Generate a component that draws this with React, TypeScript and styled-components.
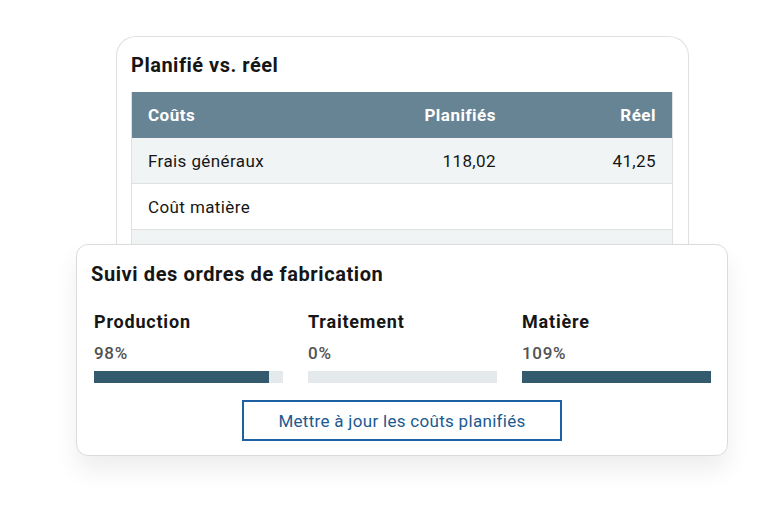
import React from 'react';
import styled, { createGlobalStyle } from 'styled-components';

const GlobalStyle = createGlobalStyle`
    html, body {
        margin: 0;
        padding: 0;
        background: #ffffff;
        font-family: Roboto, "Noto Sans", "Liberation Sans", sans-serif;
        color: #161616;
    }
`;

type CostRow = { label: string; planned?: string; actual?: string };

const rows: CostRow[] = [
    { label: 'Frais généraux', planned: '118,02', actual: '41,25' },
    { label: 'Coût matière' },
    { label: '' },
];

type Progress = { label: string; percent: number };

const progress: Progress[] = [
    { label: 'Production', percent: 98 },
    { label: 'Traitement', percent: 0 },
    { label: 'Matière', percent: 109 },
];

// bars are scaled against a slightly higher ceiling than 100%
const SCALE_MAX = 106;

const App = () => {
    return (
        <Page>
            <GlobalStyle />
            <BackCard>
                <CardTitle>Planifié vs. réel</CardTitle>
                <CostTable>
                    <HeaderRow>
                        <HeaderCell>Coûts</HeaderCell>
                        <HeaderCell $right>Planifiés</HeaderCell>
                        <HeaderCell $right>Réel</HeaderCell>
                    </HeaderRow>
                    {rows.map((row, i) => (
                        <BodyRow key={i} $striped={i % 2 === 0}>
                            <BodyCell>{row.label}</BodyCell>
                            <BodyCell $right>{row.planned}</BodyCell>
                            <BodyCell $right>{row.actual}</BodyCell>
                        </BodyRow>
                    ))}
                </CostTable>
            </BackCard>

            <FrontCard>
                <FrontTitle>Suivi des ordres de fabrication</FrontTitle>
                <ProgressGrid>
                    {progress.map((p) => (
                        <ProgressItem key={p.label}>
                            <ProgressLabel>{p.label}</ProgressLabel>
                            <ProgressValue>{p.percent}%</ProgressValue>
                            <Track>
                                <Fill
                                    style={{
                                        width: `${Math.min((p.percent / SCALE_MAX) * 100, 100)}%`,
                                    }}
                                />
                            </Track>
                        </ProgressItem>
                    ))}
                </ProgressGrid>
                <ButtonRow>
                    <OutlineButton>Mettre à jour les coûts planifiés</OutlineButton>
                </ButtonRow>
            </FrontCard>
        </Page>
    );
};

const Page = styled.div`
    width: 783px;
    height: 508px;
    padding: 36px 0 0 76px;
    box-sizing: border-box;
    overflow: hidden;
`;

const BackCard = styled.div`
    width: 573px;
    height: 230px;
    margin-left: 40px;
    box-sizing: border-box;
    border: 1px solid #e0e0e0;
    border-bottom: none;
    border-radius: 20px 20px 0 0;
    padding: 16px 15px 0 14px;
    overflow: hidden;
    background: #ffffff;
`;

const CardTitle = styled.h2`
    margin: 0 0 15px;
    font-size: 20px;
    line-height: 24px;
    font-weight: 700;
    letter-spacing: 0.5px;
`;

const CostTable = styled.div`
    border-left: 1px solid #e0e0e0;
    border-right: 1px solid #e0e0e0;
`;

const HeaderRow = styled.div`
    display: grid;
    grid-template-columns: 1fr 160px 160px;
    height: 46px;
    align-items: center;
    background: #678494;
    padding: 0 16px;
`;

const HeaderCell = styled.div<{ $right?: boolean }>`
    color: #ffffff;
    font-size: 17px;
    font-weight: 700;
    letter-spacing: 0.5px;
    text-align: ${(p) => (p.$right ? 'right' : 'left')};
`;

const BodyRow = styled.div<{ $striped: boolean }>`
    display: grid;
    grid-template-columns: 1fr 160px 160px;
    height: 45px;
    align-items: center;
    padding: 0 16px;
    background: ${(p) => (p.$striped ? '#f1f4f5' : '#ffffff')};
    border-bottom: 1px solid #e0e0e0;
`;

const BodyCell = styled.div<{ $right?: boolean }>`
    font-size: 17px;
    letter-spacing: 0.4px;
    color: #161616;
    text-align: ${(p) => (p.$right ? 'right' : 'left')};
`;

const FrontCard = styled.div`
    position: relative;
    width: 652px;
    height: 212px;
    margin-top: -22px;
    box-sizing: border-box;
    background: #ffffff;
    border: 1px solid #dcdcdc;
    border-radius: 12px;
    padding: 17px 17px 0 14px;
    box-shadow: 0 14px 24px rgba(0, 0, 0, 0.07);
`;

const FrontTitle = styled.h3`
    margin: 0 0 25px;
    font-size: 20px;
    line-height: 24px;
    font-weight: 700;
    letter-spacing: 0.6px;
`;

const ProgressGrid = styled.div`
    display: grid;
    grid-template-columns: repeat(3, 189px);
    column-gap: 25px;
    padding-left: 3px;
`;

const ProgressItem = styled.div`
    display: flex;
    flex-direction: column;
`;

const ProgressLabel = styled.div`
    font-size: 18px;
    line-height: 22px;
    font-weight: 700;
    letter-spacing: 0.8px;
    color: #161616;
    margin-bottom: 9px;
`;

const ProgressValue = styled.div`
    font-size: 17px;
    line-height: 22px;
    font-weight: 500;
    letter-spacing: 0.7px;
    color: #525252;
    margin-bottom: 7px;
`;

const Track = styled.div`
    height: 12px;
    background: #e4e9ec;
`;

const Fill = styled.div`
    height: 100%;
    background: #335a6d;
`;

const ButtonRow = styled.div`
    display: flex;
    justify-content: center;
    margin-top: 17px;
    padding-left: 3px;
`;

const OutlineButton = styled.button`
    width: 320px;
    height: 41px;
    box-sizing: border-box;
    background: #ffffff;
    border: 2px solid #1d61a4;
    border-radius: 0;
    color: #1a5a8f;
    font-family: inherit;
    font-size: 17px;
    letter-spacing: 0.3px;
    cursor: pointer;
`;

export default App;
